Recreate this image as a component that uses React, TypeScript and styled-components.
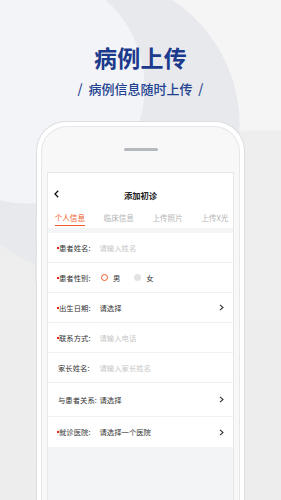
import React from "react";
import styled, { createGlobalStyle } from "styled-components";

const Global = createGlobalStyle`
  html, body { margin: 0; padding: 0; }
  body {
    width: 281px;
    height: 500px;
    overflow: hidden;
    font-family: "Noto Sans CJK SC", "Noto Sans", sans-serif;
  }
  * { box-sizing: border-box; }
`;

const Page = styled.div`
  width: 281px;
  height: 500px;
  overflow: hidden;
  display: flex;
  flex-direction: column;
  align-items: center;
  background:
    radial-gradient(circle 117px at 28px 87px, #f3f4f7 99.3%, transparent 100%),
    radial-gradient(circle 150px at 90px 125px, #e8e9ed 99.4%, transparent 100%),
    linear-gradient(#f5f5f6 0, #f5f5f6 130px, #eeeeef 131px, #ededee 100%);
`;

const Title = styled.h1`
  margin: 43px 0 0;
  font-size: 23px;
  line-height: 28px;
  font-weight: 700;
  color: #1b3a8c;
  letter-spacing: 0.3px;
`;

const Subtitle = styled.div`
  margin-top: 10px;
  font-size: 13px;
  line-height: 16px;
  font-weight: 500;
  color: #21428f;
  white-space: pre;
`;

const PhoneOuter = styled.div`
  position: relative;
  margin-top: 24px;
  width: 209px;
  flex: 1;
  border: 1px solid #dcdde0;
  border-bottom: none;
  border-radius: 30px 30px 0 0;
  background: #ffffff;
  padding: 4px 4px 0;
  display: flex;
  flex-direction: column;
`;

const SideButton = styled.div<{ $top: number }>`
  position: absolute;
  left: -2px;
  top: ${(p) => p.$top}px;
  width: 2px;
  height: 32px;
  background: #e4e5e8;
  border-radius: 1px 0 0 1px;
`;

const PhoneInner = styled.div`
  flex: 1;
  border: 1px solid #e6e7ea;
  border-bottom: none;
  border-radius: 26px 26px 0 0;
  background: #f8f8f9;
  padding: 0 5px;
  display: flex;
  flex-direction: column;
  align-items: stretch;
`;

const Speaker = styled.div`
  align-self: center;
  margin-top: 21px;
  width: 34px;
  height: 3px;
  border-radius: 2px;
  background: #b4b9c0;
`;

const Screen = styled.div`
  margin-top: 21px;
  flex: 1;
  background: #f3f4f6;
  border: 1px solid #e6e7e9;
  border-bottom: none;
  display: flex;
  flex-direction: column;
`;

const TopArea = styled.div`
  background: #ffffff;
`;

const NavBar = styled.div`
  position: relative;
  margin-top: 7px;
  height: 30px;
  display: flex;
  align-items: center;
  justify-content: center;
`;

const BackBtn = styled.span`
  position: absolute;
  left: 6px;
  top: 10px;
  display: flex;
`;

const NavTitle = styled.div`
  font-size: 8.3px;
  font-weight: 700;
  color: #222;
`;

const Tabs = styled.div`
  height: 18px;
  display: flex;
  gap: 18.5px;
  padding-left: 6.7px;
  overflow: hidden;
`;

const Tab = styled.div<{ $active?: boolean }>`
  flex: none;
  padding-top: 2px;
  height: 15.5px;
  font-size: 7.6px;
  line-height: 12px;
  white-space: nowrap;
  color: ${(p) => (p.$active ? "#f05a28" : "#b4b4b4")};
  border-bottom: 1.5px solid ${(p) => (p.$active ? "#f05a28" : "transparent")};
`;

const Band = styled.div`
  height: 5px;
  background: #f4f5f6;
`;

const Form = styled.div`
  background: #ffffff;
`;

const Row = styled.div<{ $h: number; $last?: boolean }>`
  height: ${(p) => p.$h}px;
  display: flex;
  align-items: center;
  padding: 0 9px 0 10px;
  border-bottom: ${(p) => (p.$last ? "none" : "1px solid #f1f1f2")};
  font-size: 7.35px;
  line-height: 10px;
`;

const Label = styled.div<{ $required?: boolean }>`
  position: relative;
  width: 41.5px;
  flex: none;
  color: #333;
  white-space: nowrap;
  padding-left: ${(p) => (p.$required ? "1px" : "0")};
`;

const Dot = styled.span`
  position: absolute;
  left: -1.5px;
  top: 4px;
  width: 2px;
  height: 2px;
  background: #e0211c;
`;

const Value = styled.div<{ $placeholder?: boolean }>`
  flex: 1;
  color: ${(p) => (p.$placeholder ? "#c6c6c6" : "#333")};
  white-space: nowrap;
`;

const Radios = styled.div`
  flex: 1;
  display: flex;
  align-items: center;
  padding-left: 1.5px;
`;

const Radio = styled.span<{ $on?: boolean }>`
  width: 7px;
  height: 7px;
  border-radius: 50%;
  box-sizing: border-box;
  background: ${(p) => (p.$on ? "#fff" : "#e2e2e2")};
  border: ${(p) => (p.$on ? "1.6px solid #f05a28" : "none")};
`;

const RadioText = styled.span`
  margin: 0 14px 0 5px;
  color: #333;
`;

const Chevron = () => (
  <svg width="5" height="7" viewBox="0 0 5 7">
    <path d="M1 0.8 L4 3.5 L1 6.2" fill="none" stroke="#333" strokeWidth="1.1" />
  </svg>
);

const BackIcon = () => (
  <svg width="5" height="8" viewBox="0 0 5 8">
    <path d="M4.2 0.8 L1 4 L4.2 7.2" fill="none" stroke="#111" strokeWidth="1.3" />
  </svg>
);

type Field = {
  label: string;
  required?: boolean;
  value?: string;
  placeholder?: boolean;
  arrow?: boolean;
  radio?: boolean;
  h: number;
};

const fields: Field[] = [
  { label: "患者姓名:", required: true, value: "请输入姓名", placeholder: true, h: 30 },
  { label: "患者性别:", required: true, radio: true, h: 30 },
  { label: "出生日期:", required: true, value: "请选择", arrow: true, h: 30 },
  { label: "联系方式:", required: true, value: "请输入电话", placeholder: true, h: 30 },
  { label: "家长姓名:", value: "请输入家长姓名", placeholder: true, h: 30 },
  { label: "与患者关系:", value: "请选择", arrow: true, h: 34 },
  { label: "就诊医院:", required: true, value: "请选择一个医院", arrow: true, h: 30 },
];

export default function App() {
  return (
    <>
      <Global />
      <Page>
        <Title>病例上传</Title>
        <Subtitle>/  病例信息随时上传  /</Subtitle>
        <PhoneOuter>
          <SideButton $top={93} />
          <SideButton $top={131} />
          <PhoneInner>
            <Speaker />
            <Screen>
              <TopArea>
                <NavBar>
                  <BackBtn>
                    <BackIcon />
                  </BackBtn>
                  <NavTitle>添加初诊</NavTitle>
                </NavBar>
                <Tabs>
                  <Tab $active>个人信息</Tab>
                  <Tab>临床信息</Tab>
                  <Tab>上传照片</Tab>
                  <Tab>上传X光</Tab>
                </Tabs>
              </TopArea>
              <Band />
              <Form>
                {fields.map((f, i) => (
                  <Row key={f.label} $h={f.h} $last={i === fields.length - 1}>
                    <Label $required={f.required}>
                      {f.required && <Dot />}
                      {f.label}
                    </Label>
                    {f.radio ? (
                      <Radios>
                        <Radio $on />
                        <RadioText>男</RadioText>
                        <Radio />
                        <RadioText>女</RadioText>
                      </Radios>
                    ) : (
                      <Value $placeholder={f.placeholder}>{f.value}</Value>
                    )}
                    {f.arrow && <Chevron />}
                  </Row>
                ))}
              </Form>
            </Screen>
          </PhoneInner>
        </PhoneOuter>
      </Page>
    </>
  );
}
